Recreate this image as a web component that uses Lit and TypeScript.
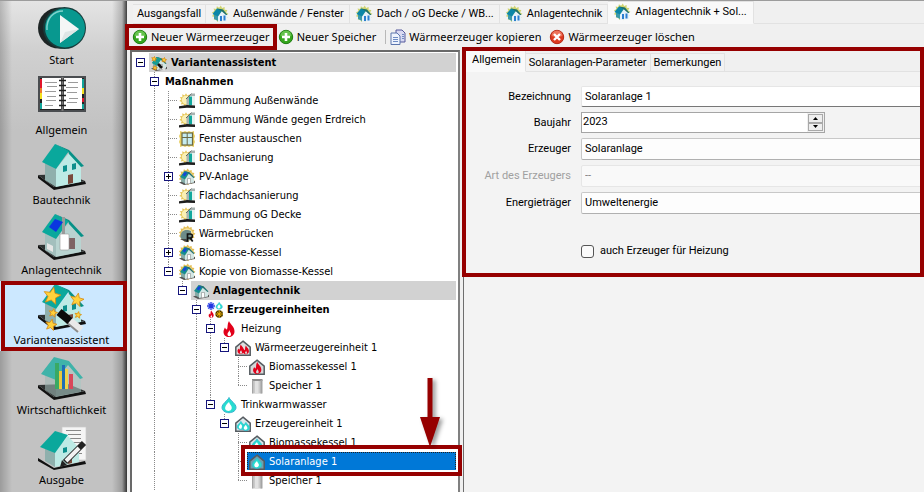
import { LitElement, html, svg, css, nothing, TemplateResult } from "lit";
import { customElement, property } from "lit/decorators.js";
import { classMap } from "lit/directives/class-map.js";

type Art = TemplateResult;

const spikes = (x: number, y: number, r: number, count: number, depth: number, turn: number) => {
  const pts: string[] = [];
  for (let i = 0; i < count * 2; i++) {
    const a = (Math.PI / count) * i - Math.PI / 2 + turn;
    const q = i % 2 ? r * depth : r;
    pts.push(`${(x + q * Math.cos(a)).toFixed(1)},${(y + q * Math.sin(a)).toFixed(1)}`);
  }
  return pts.join(" ");
};
const star = (x: number, y: number, r: number) =>
  svg`<polygon points=${spikes(x, y, r, 5, 0.45, 0.2)} fill="#ffd23c" stroke="#d98a10" stroke-width=".8"/>`;

const base = svg`<path d="M0 31 L16 43 L47 37 L48 40 L16 46 L0 34Z" fill="#111"/><path d="M0 31 L30 30 L47 37 L16 43Z" fill="#2e3232"/>`;
const roof = svg`<path d="M4 18 L17 0 L31 7 L18 25Z" fill="#0aa89c"/><path d="M17 0 L31 6 L46 22 L43 23 L31 10 L30 7Z" fill="#079187"/>`;
const walls = svg`<path d="M7 19 L18 25 L18 43 L7 36Z" fill="#8fb0ad"/><path d="M31 9 L43 22 L43 38 L18 43 L18 25Z" fill="#bdeae5"/>`;
const openings = svg`<path d="M25 22l4-1v6l-4 1zM34 20l4-1v6l-4 1z" fill="#0c8f8c"/><path d="M30 31l5-1v9l-5 1z" fill="#7a4a3c"/>`;
const house = svg`${base}${walls}${roof}${openings}`;

const big: Record<string, Art> = {
  play: svg`<ellipse cx="21" cy="24" rx="21" ry="20.500" fill="#1d2424"/><ellipse cx="26.500" cy="24" rx="21.500" ry="21" fill="#173c3b"/>
    <ellipse cx="27" cy="24" rx="20" ry="19.500" fill="#08988f"/><path d="M9 26C8 14 16 7 25 7" fill="none" stroke="#7fd3cd" stroke-width="1.500"/>
    <path d="M22 11 L41 25 L22 39Z" fill="#f4f6f6"/><path d="M41 25 L22 39 L27 28Z" fill="#dfe6e6"/>`,
  book: svg`<rect x="0" y="2" width="48" height="36" fill="#4a4d50"/><rect x="2" y="4" width="44" height="32" fill="#222"/>
    <rect x="2" y="5" width="2" height="9" fill="#e2142b"/><rect x="2" y="14" width="2" height="5" fill="#ef7b2b"/><rect x="2" y="19" width="2" height="6" fill="#f5e21e"/><rect x="2" y="29" width="2" height="6" fill="#12a59a"/>
    <rect x="44" y="5" width="2" height="9" fill="#12a59a"/><rect x="44" y="14" width="2" height="6" fill="#f5e21e"/><rect x="44" y="24" width="2" height="4" fill="#e2142b"/><rect x="44" y="30" width="2" height="5" fill="#12a59a"/>
    <rect x="4" y="4" width="19" height="31" fill="#fff"/><rect x="26" y="4" width="18" height="31" fill="#fff"/>
    <path d="M7 8.500h12M9 12.500h10M7 17.500h11M9 22.500h9M8 26.500h10M7 31.500h8M30 8.500h10M28 13.500h12M29 18.500h10M31 24.500h9M29 28.500h10" stroke="#9b9b9b" stroke-width="1"/>
    <path d="M24.500 3v34" stroke="#777" stroke-width="2"/><path d="M21 6.500h7M21 11.500h7M21 16.500h7M21 21.500h7M21 26.500h7M21 31.500h7" stroke="#222" stroke-width="1.600"/>`,
  house,
  plant: svg`${base}<path d="M7 19 L18 25 L18 43 L7 36Z" fill="#a3bfbd"/><path d="M31 9 L43 22 L43 38 L18 43 L18 25Z" fill="#b8d3d0"/>
    <rect x="29" y="24" width="8" height="11" fill="#7e6464"/><path d="M9 29l6 3v6l-6-3z" fill="#e6e6e6"/>${roof}
    <rect x="24" y="3" width="3" height="18" fill="#9a9a9a"/><rect x="22" y="20" width="9" height="16" rx="1" fill="#fff" stroke="#999" stroke-width=".6"/>
    <path d="M11 13 L17 5 L25 8 L18 18Z" fill="#0a36e0"/>`,
  wizard: svg`${house}${star(14, 12, 9)}${star(39, 16, 7)}${star(15, 29, 4.5)}${star(13, 41, 6)}${star(40, 31, 3.5)}
    <path d="M30 35 L43 46" stroke="#e9e9e9" stroke-width="7"/><path d="M28 38 L40 48" stroke="#8c8c8c" stroke-width="2"/><path d="M21 28 L32 37" stroke="#0b0b0b" stroke-width="8"/>`,
  chart: svg`${base}<path d="M7 19 L18 25 L18 43 L7 36Z" fill="#9fb5b2" opacity=".6"/><path d="M31 9 L43 22 L43 38 L18 43 L18 25Z" fill="#a9c6c2" opacity=".6"/>
    <path d="M3 20 L16 3 L31 7 L45 24 L42 25 L30 11 L18 26Z" fill="#3fb3a9"/>
    <rect x="17" y="9" width="4" height="26" fill="#3aa963"/><rect x="24" y="11" width="3" height="24" fill="#1f6fb5"/><rect x="27" y="15" width="3" height="20" fill="#f0d44a"/><rect x="21" y="17" width="3" height="18" fill="#e9c93e"/><rect x="31" y="20" width="4" height="15" fill="#d9475a"/>`,
  report: svg`<path d="M24 3h24v33H24z" fill="#f5f5f5" stroke="#ccc" stroke-width=".7"/><path d="M28 6.500h15M30 10.500h13M31 14.500h12M34 18.500h9M38 29.500h6" stroke="#888"/>
    <g transform="translate(0 5)"><path d="M0 29 L16 39 L47 32 L48 35 L16 41 L0 32Z" fill="#111"/><path d="M7 17 L17 23 L17 38 L7 32Z" fill="#8fb0ad"/><path d="M30 7 L41 19 L41 33 L17 38 L17 23Z" fill="#bdeae5"/>
    <path d="M2 18 L17 2 L30 6 L17 24Z" fill="#0aa89c"/><path d="M25 19l4-1v5l-4 1z" fill="#0c8f8c"/><path d="M30 27l4-1v8l-4 1z" fill="#7a4a3c"/></g>
    <path d="M27 38 L46 19" stroke="#222" stroke-width="6"/><path d="M28 37 L41 24" stroke="#f2f2f2" stroke-width="4"/><path d="M22 43l2-7 5 5z" fill="#222"/>`,
};

const sun = svg`<polygon points=${spikes(8, 8, 8.4, 13, 0.78, 0.1)} fill="#e3bd52"/><circle cx="8" cy="8" r="5.800" fill="#f5e3a0"/>`;
const miniHouse = svg`<path d="M0 13.500 L5 16 L16 14 L16 12 L8 11Z" fill="#555"/><path d="M2 8l4 2v4.500l-4-2z" fill="#84aaa6"/><path d="M10 4l5 4v5.500L6 15v-5z" fill="#d3e6e4"/><path d="M1 8 L5.500 2 L10.500 3.500 L6 10.500Z" fill="#178f8c"/><path d="M5.500 2l5 1.200L15.500 8.500l-1 .5L10 5z" fill="#24716f"/><path d="M3.500 6l2.300-3 2.500 1-2.500 3.500z" fill="#1846d8"/><path d="M8.500 9.500h3v5l-3 .4z" fill="#fff" stroke="#777" stroke-width=".5"/>`;
const insulation = svg`<polygon points=${spikes(7, 7, 6.8, 11, 0.7, 0)} fill="#e6c75a"/><circle cx="7" cy="7" r="4.200" fill="#fbf0b4"/>
  <path d="M7.500 5.500 L12.500 .5 H16 V3 H11 V12.500 H7.500Z" fill="#a9b3b2"/><path d="M7 6 L12.500 .7" stroke="#5c6665" stroke-width="1"/>
  <path d="M12.500 3H16v9.500h-3.500z" fill="#e6f2f1"/><path d="M10 3.500h3v9h-3z" fill="#12a89d"/><path d="M0 13.200 L8 12 L16 12.600 V15 L8 14.700 L0 15.500Z" fill="#1e1e1e"/>`;
const hut = (fill: string, inner: Art) => svg`<path d="M8 1.200 L15.200 7.200V15.200H.8V7.200Z" fill=${fill} stroke="#555b60" stroke-width="1.500"/>${inner}`;
const flame = "M8 0C9 3 14 6 13.500 11C13 14.500 10.500 16 8 16C5 16 2.500 14 2.500 11C2.500 9 3.500 7.500 4 6.500C4.500 7.500 5 8.500 6 8.500C7 6 6 3 8 0ZM8.500 9C8 11 6.500 11.500 6.500 13.200C6.500 14.500 7.200 15.200 8.300 15.200C9.500 15.200 10.200 14.200 10 13C9.800 11.500 8.600 10.800 8.500 9Z";
const fire = svg`<path d=${flame} fill="#e2001a" fill-rule="evenodd"/>`;
const drop = svg`<path d="M8 .5C9.500 4 15 6.500 15 10.500C15 13.500 12 15.700 8 15.700C4 15.700 1 13.500 1 10.500C1 6.500 6.500 4 8 .5Z" fill="#27dcd0" stroke="#38b3cf"/><path d="M8 5C4 8.500 3 12 5.500 13.500C9 15 11.500 12.500 10.500 9.500C10 8 8.500 7 8 5Z" fill="#fff"/>`;
const at = (x: number, y: number, s: number, a: Art) => svg`<g transform="translate(${x} ${y}) scale(${s})">${a}</g>`;
const magic = svg`${miniHouse}<path d="M1 8 L5.500 2 L10.500 3.500 L6 10.500Z" fill="#159c94"/>${star(3, 4, 2.6)}${star(13, 5, 2.6)}${star(4, 13, 2.4)}<path d="M10 12l4 3" stroke="#ddd" stroke-width="2.200"/><path d="M7 9l4 4" stroke="#111" stroke-width="2.600"/>`;

const small: Record<string, Art> = {
  magic,
  insulation,
  window: svg`<path d="M1 0l3 1L6 0l2 1 2-1 2 1 3-1 0 3 1 2-1 3 1 3-1 2 0 3-3-1-2 1-2-1-2 1-2-1-3 1 0-3-1-2 1-3-1-3 1-2z" fill="#e8cd5e"/><rect x="3" y="2" width="10.500" height="12" fill="#c6ecf0" stroke="#6b6a45" stroke-width="1.200"/><path d="M8.200 2v12M3 6.500h10.500" stroke="#6b6a45"/>`,
  sunhouse: svg`${sun}${miniHouse}`,
  plant: miniHouse,
  bridge: svg`${sun}<path d="M1.500 12C1 5 5 3.500 9 4l3 1v9l-6 1z" fill="#6d8c89"/><path d="M1 13l6 3h3l-3-3z" fill="#444"/><path d="M8.500 15.500V8h2.800a2 2 0 0 1 0 4H8.500M11.300 12l2.400 3.500" fill="none" stroke="#111" stroke-width="1.700"/>`,
  units: svg`<path d="M4 0v8M0 4h8M1.200 1.200l5.600 5.600M6.800 1.200L1.200 6.800" stroke="#2336e0" stroke-width="1.300"/><circle cx="4" cy="4" r="3.300" fill="none" stroke="#6b7bf0" stroke-width=".8"/>
    ${at(8.5, 0, 0.46, drop)}${at(0.5, 8.5, 0.46, fire)}<circle cx="12.200" cy="12" r="3.800" fill="#3a2c05"/><path d="M12.200 8.200v7.600M8.400 12H16M9.500 9.300l5.400 5.400M14.900 9.300l-5.400 5.400" stroke="#f0b400" stroke-width="1"/>`,
  fire,
  drop,
  huts: hut("#dedede", svg`${at(1, 4.5, 0.6, fire)}${at(6.5, 5.5, 0.55, fire)}`),
  firehut: hut("#d5d7d8", at(2.2, 3, 0.75, fire)),
  drophuts: hut("#dce9ec", svg`${at(1.5, 5, 0.55, drop)}${at(6.5, 6, 0.55, drop)}`),
  drophut: hut("#d8e4e7", at(2.4, 3.5, 0.7, drop)),
  solarhut: hut("#6f9fae", at(2.4, 3.5, 0.7, drop)),
  tank: svg`<path d="M3.500 1.500h9.500v14h-9.500z" fill="#c9c9c9"/><path d="M6 2h3.500v13.500H6z" fill="#e2e2e2"/><path d="M3 1h10.500v2H3z" fill="#8e8e8e"/><path d="M11.500 2h2v13.500h-2zM3 2h1.200v13.500H3z" fill="#a4a4a4"/>`,
  tab: svg`<polygon points=${spikes(8, 8, 8.4, 13, 0.75, 0.1)} fill="#cfd470"/><path d="M2 8l4 2v5l-4-2z" fill="#3c9aa8"/><path d="M10 5l5 4v6l-9 1V10z" fill="#e5f1fa"/><path d="M.5 8 L5 2.500 L10.500 4 L6 10.500Z" fill="#0b86a8"/><path d="M5 2.500l6 1 4.500 5.500h-1.500L10 5.500z" fill="#1e6f6b"/><path d="M8 10h2v5H8zM11.500 9.500h2v5h-2z" fill="#2b7fd0"/>`,
  add: svg`<circle cx="8" cy="8" r="6.700" fill="#35a51d" stroke="#1f7d12"/><path d="M2.500 7a5.500 5.500 0 0 1 11 0q-5.500 2-11 0z" fill="#7bd063" opacity=".7"/><path d="M8 4v8M4 8h8" stroke="#fff" stroke-width="2.600"/>`,
  del: svg`<circle cx="8" cy="8" r="6.700" fill="#de3a20" stroke="#b52a17"/><path d="M2.500 7a5.500 5.500 0 0 1 11 0q-5.500 2-11 0z" fill="#f48a72" opacity=".7"/><path d="M5 5l6 6M11 5l-6 6" stroke="#fff" stroke-width="2.400"/>`,
  copy: svg`<path d="M6 1h6l3 3v9H6z" fill="#d9d9f2" stroke="#55589c"/><path d="M1 4h6l3 3v8.500H1z" fill="#eef3fd" stroke="#5c76ad"/><path d="M3 8.500h5M3 10.500h5M3 12.500h5M12 5.500h2M12 7.500h2M12 9.500h2" stroke="#6f8cc4"/>`,
};

@customElement("app-icon")
class AppIcon extends LitElement {
  @property() name = "";
  @property({ type: Boolean }) large = false;
  static styles = css`
    :host { display: block; flex: none; }
    svg { display: block; overflow: visible; }
  `;
  render() {
    return this.large
      ? html`<svg width="48" height="46" viewBox="0 0 48 46" aria-hidden="true">${big[this.name]}</svg>`
      : html`<svg width="16" height="16" viewBox="0 0 16 16" aria-hidden="true">${small[this.name]}</svg>`;
  }
}

interface Node {
  label: string;
  icon?: string;
  bold?: boolean;
  shaded?: boolean;
  selected?: boolean;
  closed?: boolean;
  continues?: boolean;
  kids?: Node[];
}

const leaf = (label: string, icon: string): Node => ({ label, icon });

const tree: Node = {
  label: "Variantenassistent", icon: "magic", bold: true, shaded: true,
  kids: [{
    label: "Maßnahmen", bold: true, continues: true,
    kids: [
      leaf("Dämmung Außenwände", "insulation"),
      leaf("Dämmung Wände gegen Erdreich", "insulation"),
      leaf("Fenster austauschen", "window"),
      leaf("Dachsanierung", "insulation"),
      { label: "PV-Anlage", icon: "sunhouse", closed: true },
      leaf("Flachdachsanierung", "insulation"),
      leaf("Dämmung oG Decke", "insulation"),
      leaf("Wärmebrücken", "bridge"),
      { label: "Biomasse-Kessel", icon: "sunhouse", closed: true },
      {
        label: "Kopie von Biomasse-Kessel", icon: "sunhouse",
        kids: [{
          label: "Anlagentechnik", icon: "plant", bold: true, shaded: true,
          kids: [{
            label: "Erzeugereinheiten", icon: "units", bold: true, continues: true,
            kids: [
              { label: "Heizung", icon: "fire", kids: [
                { label: "Wärmeerzeugereinheit 1", icon: "huts", kids: [
                  leaf("Biomassekessel 1", "firehut"),
                  leaf("Speicher 1", "tank"),
                ] },
              ] },
              { label: "Trinkwarmwasser", icon: "drop", kids: [
                { label: "Erzeugereinheit 1", icon: "drophuts", kids: [
                  leaf("Biomassekessel 1", "drophut"),
                  { label: "Solaranlage 1", icon: "solarhut", selected: true },
                  leaf("Speicher 1", "tank"),
                ] },
              ] },
            ],
          }],
        }],
      },
    ],
  }],
};

@customElement("variant-tree")
class VariantTree extends LitElement {
  static styles = css`
    :host { display: block; font: 11px/19px "DejaVu Sans Condensed", "DejaVu Sans", sans-serif; font-stretch: condensed; color: #000; }
    .row { display: flex; height: 19px; position: relative; }
    .cell { width: 14px; flex: none; }
    .node { width: 16px; flex: none; display: grid; align-items: center; padding-left: 3px; box-sizing: border-box; }
    .line, .half {
      background: repeating-linear-gradient(to bottom, #8a8a8a 0 1px, transparent 1px 2px) 7px 0 / 1px 100% no-repeat;
    }
    .half { background-size: 1px 10px; }
    .stub { height: 1px; margin-left: 4px; background: repeating-linear-gradient(to right, #8a8a8a 0 1px, transparent 1px 2px); }
    .toggle {
      width: 9px; height: 9px; box-sizing: border-box; padding: 0; border: 1px solid #15157c; border-radius: 0;
      background: linear-gradient(#000, #000) center / 5px 1px no-repeat, #fff;
    }
    .toggle.closed {
      background: linear-gradient(#000, #000) center / 5px 1px no-repeat, linear-gradient(#000, #000) center / 1px 5px no-repeat, #fff;
    }
    .label { flex: 1; display: flex; align-items: center; gap: 4px; padding-left: 2px; white-space: nowrap; min-width: 0; }
    .bold { font-weight: bold; }
    .shaded { background: #d2d2d2; }
    .selected { background: #0078d7; color: #fff; outline: 1px dotted #222; outline-offset: -1px; }
    .marker { position: absolute; inset: -7px -6px -5px 108px; border: 4px solid #960000; pointer-events: none; box-shadow: inset 0 0 0 2px #fff; }
    .arrow { position: absolute; right: 16px; bottom: 23px; filter: drop-shadow(3px 2px 2px #0006); }
    .marked { z-index: 1; }
  `;

  private rows(n: Node, depth: number, lines: boolean[], last: boolean): TemplateResult {
    const open = !!n.kids;
    const continuing = !last || !!n.continues;
    return html`
      <div class=${classMap({ row: true, marked: !!n.selected })} role="treeitem" aria-level=${depth + 1} aria-selected=${n.selected ? "true" : "false"}>
        ${lines.map((l) => html`<span class=${classMap({ cell: true, line: l })}></span>`)}
        <span class=${classMap({ node: true, line: depth > 0 && continuing, half: depth > 0 && !continuing })}>
          ${open || n.closed
            ? html`<button class=${classMap({ toggle: true, closed: !!n.closed })} aria-label=${open ? "Zuklappen" : "Aufklappen"}></button>`
            : html`<span class="stub"></span>`}
        </span>
        <span class=${classMap({ label: true, bold: !!n.bold, shaded: !!n.shaded, selected: !!n.selected })}>
          ${n.icon ? html`<app-icon name=${n.icon}></app-icon>` : nothing}${n.label}
        </span>
        ${n.selected
          ? html`<span class="marker"></span>
              <svg class="arrow" width="20" height="70" viewBox="0 0 20 70" aria-hidden="true"><path d="M7.500 0h5v39H20L10 69 0 39h7.500z" fill="#960000" /></svg>`
          : nothing}
      </div>
      ${n.kids?.map((k, i) => this.rows(k, depth + 1, [...lines, depth > 0 && continuing], i === n.kids!.length - 1))}
    `;
  }

  render() {
    return html`<div role="tree">${this.rows(tree, 0, [], true)}</div>`;
  }
}

@customElement("app-root")
class AppRoot extends LitElement {
  static styles = css`
    :host {
      display: flex; height: 100vh; overflow: hidden; background: #f0f0f0; color: #000;
      box-sizing: border-box; border-top: 1px solid #9c9c9c;
      font: 11px/16px "Noto Sans", "Open Sans", sans-serif;
    }
    button, input, select { font: inherit; color: inherit; box-sizing: border-box; margin: 0; }
    .sidebar {
      width: 127px; flex: none;
      background:
        linear-gradient(to right, #0003 0, #0000 12px, #0000 112px, #0003 122px, #000b 127px),
        linear-gradient(#e4e4e4, #d0d0d0 50px, #c2c2c2 130px);
    }
    .nav {
      display: flex; flex-direction: column; align-items: center; gap: 2px;
      width: 100%; height: 70px; padding: 3px 4px 0 0; border: 0; background: none; position: relative;
    }
    .nav.current { background: #cce8ff; }
    .nav.current::after { content: ""; position: absolute; inset: 0 0 0 1px; border: 4px solid #960000; }
    .main { flex: 1; min-width: 0; display: flex; flex-direction: column; padding-left: 3px; }
    .tabs { display: flex; align-items: flex-end; height: 23px; padding-left: 3px; flex: none; }
    .narrow { font: 11px/16px Roboto, "Liberation Sans", sans-serif; }
    .tab {
      display: flex; align-items: center; gap: 5px; height: 20px; padding: 0 4px; white-space: nowrap;
      border: solid #e2e2e2; border-width: 1px 1px 1px 0; background: #f2f2f2;
    }
    .tab.iconed { padding: 0 5px 0 6px; }
    .tab.active { height: 23px; background: #f9f9f9; border-bottom-color: #f9f9f9; padding: 0 6px 2px 6px; }
    .rest { flex: 1; align-self: stretch; border-bottom: 1px solid #e2e2e2; }
    .toolbar { display: flex; align-items: center; height: 26px; flex: none; padding-left: 2px; gap: 8px; }
    .tool { display: flex; align-items: center; gap: 3px; padding: 0; border: 0; background: none; position: relative; white-space: nowrap; }
    .tool.marked::after { content: ""; position: absolute; inset: -5px -7px -5px -7px; border: 4px solid #960000; z-index: 2; }
    .sep { width: 1px; height: 14px; background: #b8b8b8; margin: 0 -4px 0 1px; }
    .body { flex: 1; min-height: 0; display: flex; gap: 3px; }
    .treepane {
      flex: none; width: 330px; box-sizing: border-box; background: #fff;
      border: solid #696969; border-width: 2px 2px 0 2px; border-right-color: #808080; padding: 1px 2px 0 1px;
    }
    .details { flex: 1; min-width: 0; border-left: 1px solid #6e6e6e; background: #f3f3f3; position: relative; }
    .framed { position: relative; padding-bottom: 12px; }
    .framed::after { content: ""; position: absolute; inset: -3px 0 -4px -2px; border: 4px solid #960000; pointer-events: none; }
    .pagetabs { display: flex; align-items: flex-end; height: 22px; background: #f0f0f0; padding-left: 2px; }
    .pagetabs .tab { height: 19px; padding: 0 3px; }
    .pagetabs .tab.active { height: 22px; padding: 0 4px 2px 6px; }
    .form { display: grid; grid-template-columns: 107px 1fr; column-gap: 10px; row-gap: 5px; padding-top: 14px; align-items: center; }
    .form > label { text-align: right; }
    .form .off { color: #a0a0a0; }
    .text, .choice { width: 100%; border-radius: 2px; padding: 0 3px; }
    .text { height: 21px; border: 1px solid #e6e6e6; border-bottom: 1px solid #777; background: #fff; }
    .choice { height: 22px; appearance: none; background: #fdfdfd; border: 1px solid #c8c8c8; border-bottom-color: #b0b0b0; }
    .choice:disabled { background: #f9f9f9; border-color: #e6e6e6; color: #808080; opacity: 1; }
    .spin { display: flex; width: 244px; height: 21px; box-sizing: border-box; border: 1px solid #a5a5a5; background: #fff; }
    .spin input { flex: 1; min-width: 0; border: 0; padding: 0 2px 2px 1px; background: none; outline: 0; }
    .steps { display: flex; flex-direction: column; width: 15px; padding: 1px; background: #f0f0f0; }
    .step { flex: 1; display: grid; place-items: center; padding: 0; border: 1px solid #a9a9a9; background: #eee; }
    .step svg { display: block; }
    .check { grid-column: 2; display: flex; align-items: center; gap: 6px; margin-top: 22px; height: 20px; }
    .form > label.check { text-align: left; }
    .check input { appearance: none; width: 13px; height: 13px; border: 1px solid #555; border-radius: 3px; background: #fafafa; }
  `;

  private nav(icon: string, label: string, current = false) {
    return html`<button class=${classMap({ nav: true, current })}><app-icon large name=${icon}></app-icon>${label}</button>`;
  }

  private tool(icon: string, label: string, marked = false) {
    return html`<button class=${classMap({ tool: true, marked })}><app-icon name=${icon}></app-icon>${label}</button>`;
  }

  render() {
    return html`
      <nav class="sidebar">
        ${this.nav("play", "Start")} ${this.nav("book", "Allgemein")} ${this.nav("house", "Bautechnik")}
        ${this.nav("plant", "Anlagentechnik")} ${this.nav("wizard", "Variantenassistent", true)}
        ${this.nav("chart", "Wirtschaftlichkeit")} ${this.nav("report", "Ausgabe")}
      </nav>
      <main class="main">
        <div class="tabs narrow" role="tablist">
          <button class="tab" role="tab">Ausgangsfall</button>
          ${["Außenwände / Fenster", "Dach / oG Decke / WB...", "Anlagentechnik"].map(
            (t) => html`<button class="tab iconed" role="tab"><app-icon name="tab"></app-icon>${t}</button>`
          )}
          <button class="tab active" role="tab" aria-selected="true"><app-icon name="tab"></app-icon>Anlagentechnik + Sol...</button>
          <span class="rest"></span>
        </div>
        <div class="toolbar" role="toolbar">
          ${this.tool("add", "Neuer Wärmeerzeuger", true)} ${this.tool("add", "Neuer Speicher")}
          <span class="sep"></span>
          ${this.tool("copy", "Wärmeerzeuger kopieren")} ${this.tool("del", "Wärmeerzeuger löschen")}
        </div>
        <div class="body">
          <div class="treepane"><variant-tree></variant-tree></div>
          <section class="details narrow">
            <div class="framed">
              <div class="pagetabs" role="tablist">
                <button class="tab active" role="tab" aria-selected="true">Allgemein</button>
                <button class="tab" role="tab">Solaranlagen-Parameter</button>
                <button class="tab" role="tab">Bemerkungen</button>
                <span class="rest"></span>
              </div>
              <form class="form">
                <label for="name">Bezeichnung</label>
                <input id="name" class="text" .value=${"Solaranlage 1"} />
                <label for="year">Baujahr</label>
                <div class="spin">
                  <input id="year" inputmode="numeric" .value=${"2023"} />
                  <span class="steps">
                    <button type="button" class="step" aria-label="Jahr erhöhen"><svg width="5" height="3" viewBox="0 0 5 3"><path d="M0 3h5L2.500 0z" /></svg></button>
                    <button type="button" class="step" aria-label="Jahr verringern"><svg width="5" height="3" viewBox="0 0 5 3"><path d="M0 0h5L2.500 3z" /></svg></button>
                  </span>
                </div>
                <label for="kind">Erzeuger</label>
                <select id="kind" class="choice"><option>Solaranlage</option></select>
                <label for="type" class="off">Art des Erzeugers</label>
                <select id="type" class="choice" disabled><option>--</option></select>
                <label for="carrier">Energieträger</label>
                <select id="carrier" class="choice"><option>Umweltenergie</option></select>
                <label class="check"><input type="checkbox" />auch Erzeuger für Heizung</label>
              </form>
            </div>
          </section>
        </div>
      </main>
    `;
  }
}
